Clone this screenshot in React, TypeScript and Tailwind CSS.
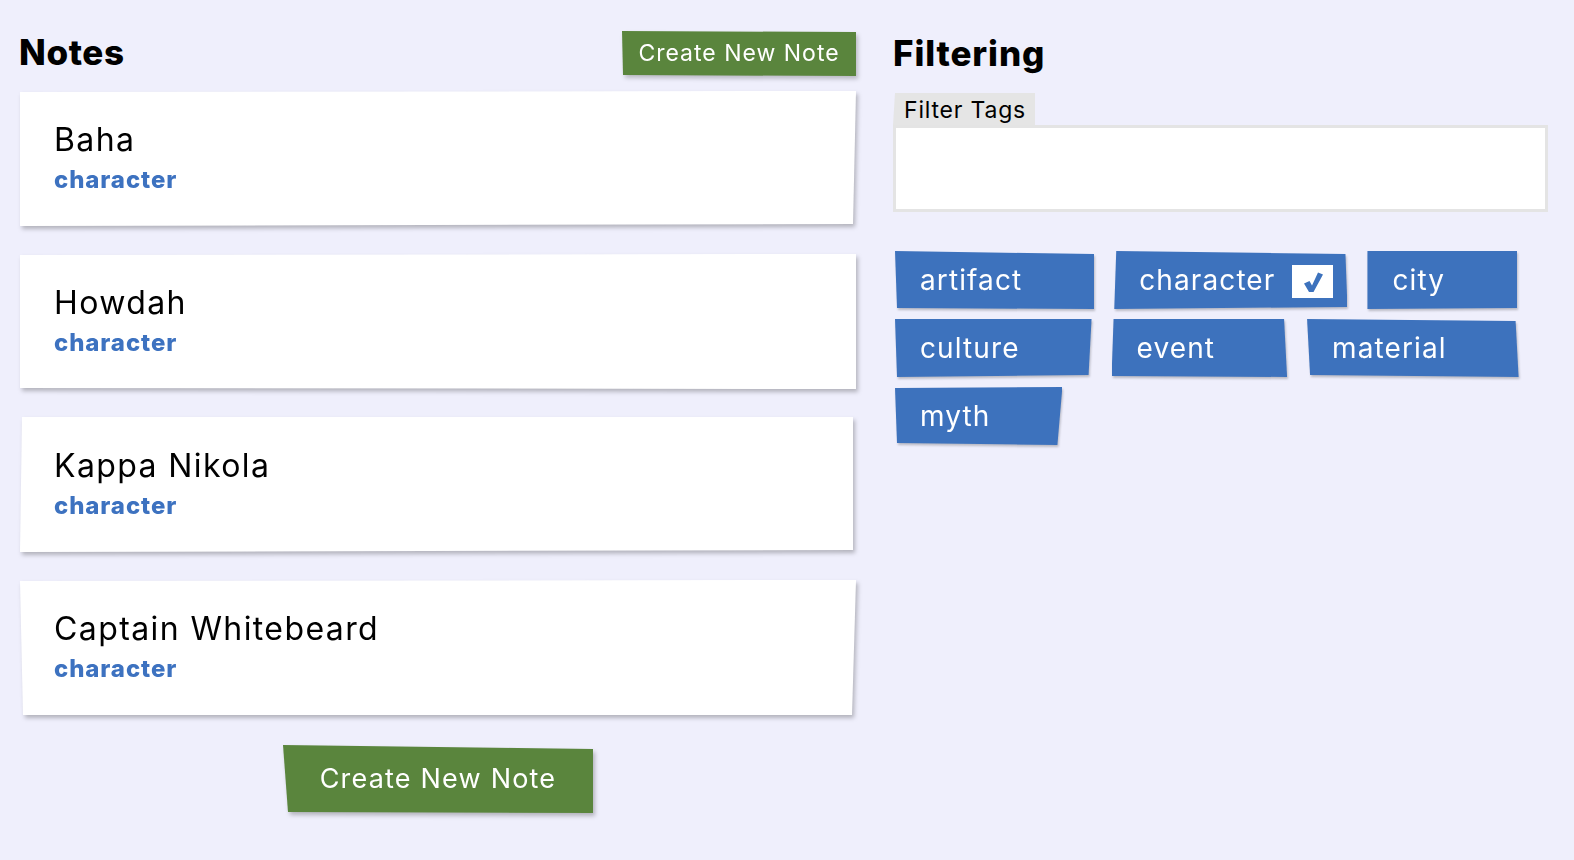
import React from "react";

const notes = [
  { title: "Baha", tag: "character", clip: "[clip-path:polygon(0_1px,100%_0,calc(100%-3px)_calc(100%-2px),0_100%)]" },
  { title: "Howdah", tag: "character", clip: "[clip-path:polygon(0_1px,100%_0,100%_100%,0_calc(100%-1px))]" },
  { title: "Kappa Nikola", tag: "character", clip: "[clip-path:polygon(2px_0,calc(100%-3px)_0,calc(100%-3px)_calc(100%-2px),0_100%)]" },
  { title: "Captain Whitebeard", tag: "character", clip: "[clip-path:polygon(0_1px,100%_0,calc(100%-4px)_100%,3px_100%)]" },
];

const tagRows = [
  [
    { name: "artifact", checked: false, clip: "[clip-path:polygon(0_0,100%_3px,100%_100%,2px_calc(100%-1px))]" },
    { name: "character", checked: true, clip: "[clip-path:polygon(2px_0,calc(100%-2px)_3px,100%_calc(100%-2px),0_100%)]" },
    { name: "city", checked: false, clip: "[clip-path:polygon(0_0,100%_0,100%_calc(100%-1px),0_100%)]" },
  ],
  [
    { name: "culture", checked: false, clip: "[clip-path:polygon(0_0,100%_0,calc(100%-3px)_calc(100%-2px),2px_100%)]" },
    { name: "event", checked: false, clip: "[clip-path:polygon(2px_0,calc(100%-3px)_0,100%_100%,0_calc(100%-1px))]" },
    { name: "material", checked: false, clip: "[clip-path:polygon(0_0,calc(100%-3px)_2px,100%_100%,3px_calc(100%-2px))]" },
  ],
  [{ name: "myth", checked: false, clip: "[clip-path:polygon(0_1px,100%_0,calc(100%-5px)_100%,2px_calc(100%-2px))]" }],
];

export default function App() {
  return (
    <div className="min-h-screen bg-[#efeffc] font-['Inter','Noto_Sans',sans-serif] text-black">
      <div className="flex gap-[37px] pl-5 pr-[26px] pt-[31px]">
        {/* Notes column */}
        <div className="w-[836px] flex flex-col">
          <div className="flex items-center justify-between h-[45px]">
            <h1 className="text-[35px] font-extrabold tracking-[0.6px] leading-none -ml-px -mt-[3px]">Notes</h1>
            <div className="drop-shadow-[2px_3px_2px_rgba(0,0,0,0.22)]">
              <button className="h-[45px] w-[234px] bg-[#5a853d] text-white text-[23px] tracking-[1px] [clip-path:polygon(0_0,100%_1px,100%_100%,1px_calc(100%-1px))]">
                Create New Note
              </button>
            </div>
          </div>

          <div className="mt-[15px] flex flex-col gap-7">
            {notes.map((note, i) => (
              <div key={i} className="drop-shadow-[2px_3px_2px_rgba(0,0,0,0.25)]">
                <div className={`h-[135px] bg-white pl-[34px] pt-[29px] ${note.clip}`}>
                  <div className="text-[32px] leading-[40px] tracking-[1.4px]">{note.title}</div>
                  <div className="mt-[5px] text-[24px] leading-[30px] font-extrabold text-[#3d72c0] tracking-[0.9px]">
                    {note.tag}
                  </div>
                </div>
              </div>
            ))}
          </div>

          <div className="mt-[30px] self-center drop-shadow-[2px_3px_2px_rgba(0,0,0,0.25)]">
            <button className="h-[68px] w-[310px] bg-[#5a853d] text-white text-[27px] tracking-[1.2px] [clip-path:polygon(0_0,100%_4px,100%_100%,5px_calc(100%-1px))]">
              Create New Note
            </button>
          </div>
        </div>

        {/* Filtering column */}
        <div className="w-[655px] flex flex-col">
          <h1 className="h-[45px] flex items-center text-[35px] font-extrabold tracking-[0.9px] leading-none">
            Filtering
          </h1>
          <div className="mt-[17px] self-start h-[32px] w-[142px] bg-[#e5e5e5] pl-[11px] text-[23px] leading-[34px] tracking-[0.8px] [clip-path:polygon(2px_0,100%_0,100%_100%,0_100%)]">
            Filter Tags
          </div>
          <div className="h-[87px] bg-white border-[3px] border-[#e4e4e4]" />

          <div className="mt-[39px] flex flex-col gap-[10px] pl-[2px]">
            {tagRows.map((row, r) => (
              <div key={r} className="flex gap-5">
                {row.map((tag) => (
                  <div key={tag.name} className="drop-shadow-[1px_2px_1px_rgba(0,0,0,0.22)]">
                    <div
                      className={`relative h-[58px] bg-[#3d72bd] pl-[25px] pr-[72px] flex items-center text-white text-[28px] tracking-[1.1px] ${tag.clip}`}
                    >
                      {tag.name}
                      {tag.checked && (
                        <span className="absolute right-[14px] top-[14px] h-[33px] w-[41px] bg-white flex items-center justify-center">
                          <svg width="22" height="22" viewBox="0 0 22 22">
                            <path
                              d="M2 12.5 L7.5 10 L10 14.5 L16 1.5 L21 3.5 L11.5 21 L7 21 Z"
                              fill="#3d72bd"
                            />
                          </svg>
                        </span>
                      )}
                    </div>
                  </div>
                ))}
              </div>
            ))}
          </div>
        </div>
      </div>
    </div>
  );
}
